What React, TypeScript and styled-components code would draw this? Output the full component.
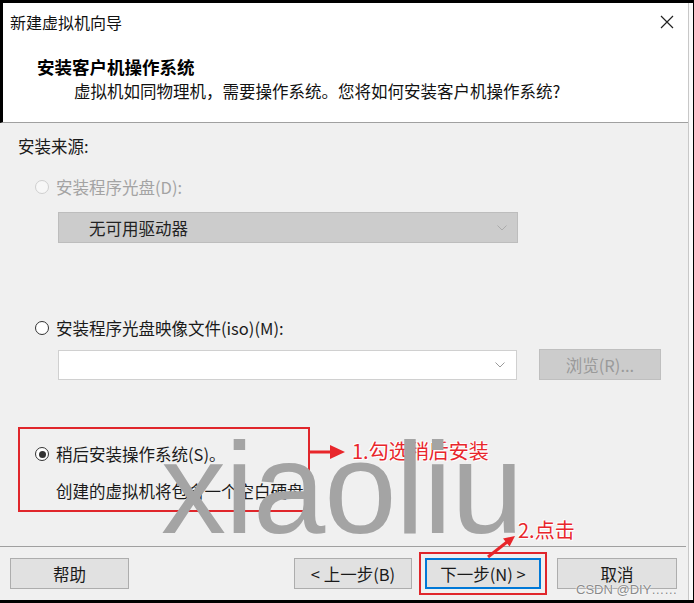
import React from "react";
import styled, { createGlobalStyle } from "styled-components";

const Global = createGlobalStyle`
  html, body { margin: 0; padding: 0; background: #000; }
  body { font-family: "Noto Sans CJK SC", "Noto Sans", "Liberation Sans", sans-serif; }
  * { box-sizing: border-box; }
`;

const Window = styled.div`
  position: relative;
  width: 694px;
  height: 603px;
  display: flex;
  border-top: 3px solid #000;
  border-bottom: 3px solid #000;
  background: #f0f0f0;
  overflow: hidden;
  color: #1a1a1a;
  font-size: 16.5px;
`;

const Dialog = styled.div`
  flex: 1;
  display: flex;
  flex-direction: column;
  min-width: 0;
`;

const RightStrip = styled.div`
  width: 6px;
  background: #fafafa;
  border-left: 1px solid #c8c8c8;
  border-right: 1px solid #000;
`;

const Header = styled.div`
  background: #fff;
  border-left: 3px solid #000;
  border-bottom: 1px solid #a0a0a0;
  padding-bottom: 19px;
`;

const TitleBar = styled.div`
  height: 38px;
  display: flex;
  align-items: center;
  justify-content: space-between;
  padding: 0 14px 0 7px;
  line-height: 38px;
  font-size: 16px;
  color: #111;
`;

const HeaderTitle = styled.div`
  margin: 14px 0 0 34px;
  font-weight: 700;
  font-size: 17.5px;
  line-height: 24px;
  color: #000;
`;

const HeaderSub = styled.div`
  margin-left: 71px;
  line-height: 24px;
  color: #111;
`;

const Body = styled.div`
  flex: 1;
  padding: 12px 0 0 18px;
  display: flex;
  flex-direction: column;
  align-items: flex-start;
`;

const SectionLabel = styled.div`
  line-height: 22px;
`;

const RadioRow = styled.div<{ $mt: number; $disabled?: boolean }>`
  margin-top: ${(p) => p.$mt}px;
  padding-left: 17px;
  display: flex;
  align-items: center;
  gap: 7px;
  line-height: 22px;
  color: ${(p) => (p.$disabled ? "#a3a3a3" : "#1a1a1a")};
`;

const RadioCircle = styled.span<{ $state: "disabled" | "off" | "on" }>`
  width: 14px;
  height: 14px;
  border-radius: 50%;
  background: ${(p) => (p.$state === "disabled" ? "#f7f7f7" : "#fff")};
  border: 1px solid ${(p) => (p.$state === "disabled" ? "#cfcfcf" : "#333")};
  display: inline-flex;
  align-items: center;
  justify-content: center;
  flex: none;
  &::after {
    content: "";
    width: 7px;
    height: 7px;
    border-radius: 50%;
    background: ${(p) => (p.$state === "on" ? "#333" : "transparent")};
  }
`;

const Select = styled.div<{ $disabled?: boolean }>`
  margin: 14px 0 0 40px;
  width: 460px;
  height: 31px;
  display: flex;
  align-items: center;
  justify-content: space-between;
  padding: 0 10px 0 30px;
  background: ${(p) => (p.$disabled ? "#cccccc" : "#fff")};
  border: 1px solid ${(p) => (p.$disabled ? "#bdbdbd" : "#d5d5d5")};
  color: #222;
`;

const ComboRow = styled.div`
  margin: 10px 0 0 40px;
  display: flex;
  align-items: flex-start;
  gap: 22px;
`;

const Combo = styled.div`
  margin-top: 1px;
  width: 459px;
  height: 30px;
  background: #fff;
  border: 1px solid #d0d0d0;
  display: flex;
  align-items: center;
  justify-content: flex-end;
  padding-right: 11px;
`;

const Button = styled.div<{ $w: number; $disabled?: boolean; $focused?: boolean }>`
  width: ${(p) => p.$w}px;
  height: 31px;
  display: flex;
  align-items: center;
  justify-content: center;
  background: ${(p) => (p.$disabled ? "#cccccc" : "#e1e1e1")};
  border: ${(p) => (p.$focused ? "2px solid #0078d7" : p.$disabled ? "1px solid #bfbfbf" : "1px solid #adadad")};
  color: ${(p) => (p.$disabled ? "#9a9a9a" : "#1a1a1a")};
  font-size: 16.5px;
  line-height: 22px;
  flex: none;
`;

const RedBox = styled.div`
  margin-top: 47px;
  width: 292px;
  height: 85px;
  border: 2px solid #e0262b;
  padding: 14px 0 0 15px;
  white-space: nowrap;
`;

const InBoxRadio = styled.div`
  display: flex;
  align-items: center;
  gap: 7px;
  line-height: 22px;
`;

const Desc = styled.div`
  margin: 15px 0 0 21px;
  line-height: 22px;
  white-space: nowrap;
`;

const Footer = styled.div`
  height: 54px;
  border-top: 1px solid #a0a0a0;
  margin-right: 2px;
  display: flex;
  align-items: center;
  padding: 0 9px 0 10px;
`;

const Spacer = styled.div`
  flex: 1;
`;

const FocusHighlight = styled.div`
  margin: 0 10px 0 7px;
  padding: 4px;
  border: 2px solid #e0262b;
`;

const Watermark = styled.div`
  position: absolute;
  left: 161px;
  top: 420px;
  font-family: "Liberation Sans", Arial, sans-serif;
  font-size: 130px;
  line-height: 1;
  color: #a4a4a4;
  pointer-events: none;
  letter-spacing: -1px;
`;

const Note = styled.div<{ $x: number; $y: number }>`
  position: absolute;
  left: ${(p) => p.$x}px;
  top: ${(p) => p.$y}px;
  font-size: 20px;
  line-height: 24px;
  color: #e8262b;
  text-shadow: 0 0 2px #fff, 0 0 2px #fff, 1px 1px 0 #fff, -1px -1px 0 #fff;
  white-space: nowrap;
`;

const ArrowSvg = styled.svg<{ $x: number; $y: number }>`
  position: absolute;
  left: ${(p) => p.$x}px;
  top: ${(p) => p.$y}px;
  overflow: visible;
`;

const Credit = styled.div`
  position: absolute;
  left: 576px;
  top: 579px;
  font-family: "Liberation Sans", Arial, sans-serif;
  font-size: 13px;
  line-height: 16px;
  color: #8a8a8a;
  text-shadow: 0 0 1px #fff, 0 0 2px #fff;
  white-space: nowrap;
`;

const Chevron = ({ color }: { color: string }) => (
  <svg width="10" height="6" viewBox="0 0 10 6">
    <polyline points="0.5,0.5 5,5 9.5,0.5" fill="none" stroke={color} strokeWidth="1" />
  </svg>
);

export default function App() {
  return (
    <>
      <Global />
      <Window>
        <Dialog>
          <Header>
            <TitleBar>
              <span>新建虚拟机向导</span>
              <svg width="14" height="14" viewBox="0 0 14 14">
                <path d="M1 1 L13 13 M13 1 L1 13" stroke="#222" strokeWidth="1.2" />
              </svg>
            </TitleBar>
            <HeaderTitle>安装客户机操作系统</HeaderTitle>
            <HeaderSub>虚拟机如同物理机，需要操作系统。您将如何安装客户机操作系统?</HeaderSub>
          </Header>
          <Body>
            <SectionLabel>安装来源:</SectionLabel>
            <RadioRow $mt={19} $disabled>
              <RadioCircle $state="disabled" />
              <span>安装程序光盘(D):</span>
            </RadioRow>
            <Select $disabled>
              <span>无可用驱动器</span>
              <Chevron color="#ababab" />
            </Select>
            <RadioRow $mt={74}>
              <RadioCircle $state="off" />
              <span>安装程序光盘映像文件(iso)(M):</span>
            </RadioRow>
            <ComboRow>
              <Combo>
                <Chevron color="#9a9a9a" />
              </Combo>
              <Button $w={122} $disabled>浏览(R)...</Button>
            </ComboRow>
            <RedBox>
              <InBoxRadio>
                <RadioCircle $state="on" />
                <span>稍后安装操作系统(S)。</span>
              </InBoxRadio>
              <Desc>创建的虚拟机将包含一个空白硬盘。</Desc>
            </RedBox>
          </Body>
          <Footer>
            <Button $w={119}>帮助</Button>
            <Spacer />
            <Button $w={118}>&lt; 上一步(B)</Button>
            <FocusHighlight>
              <Button $w={116} $focused>下一步(N) &gt;</Button>
            </FocusHighlight>
            <Button $w={120}>取消</Button>
          </Footer>
        </Dialog>
        <RightStrip />
        <ArrowSvg $x={310} $y={440} width="36" height="18" viewBox="0 0 36 18">
          <line x1="0" y1="9" x2="24" y2="9" stroke="#e8262b" strokeWidth="3" />
          <polygon points="20,2 35,9 20,16" fill="#e8262b" />
        </ArrowSvg>
        <Note $x={352} $y={436}>1.勾选稍后安装</Note>
        <ArrowSvg $x={484} $y={529} width="34" height="28" viewBox="0 0 34 28">
          <line x1="4" y1="25" x2="23" y2="10" stroke="#e8262b" strokeWidth="3" />
          <polygon points="31,4 25.6,14.5 19,6.5" fill="#e8262b" />
        </ArrowSvg>
        <Note $x={518} $y={515}>2.点击</Note>
        <Watermark>xiaoliu</Watermark>
        <Credit>CSDN @DIY……</Credit>
      </Window>
    </>
  );
}
